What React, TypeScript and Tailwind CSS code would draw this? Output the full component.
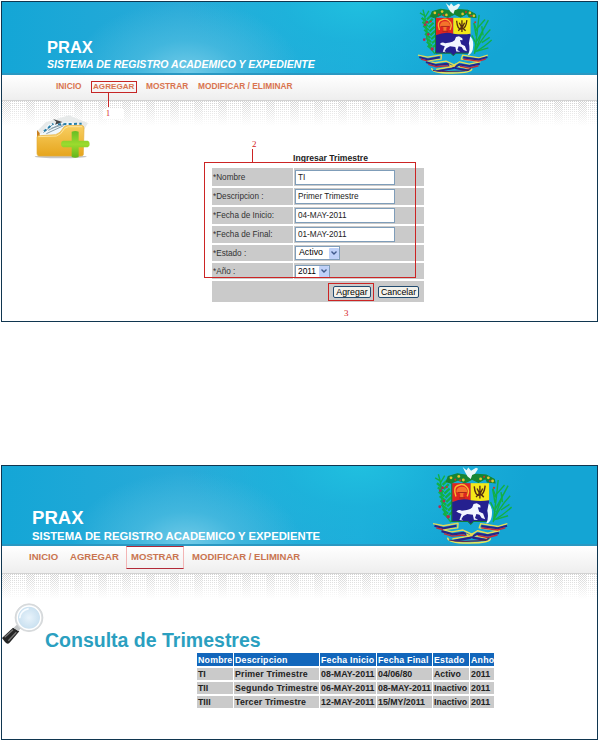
import React from "react";

function Crest({ className }: { className: string }) {
  const leaves = [64, 76, 88, 100, 112, 124, 136, 148];
  return (
    <svg className={className} viewBox="50 3 230 218" preserveAspectRatio="none">
      <g fill="none" stroke="#12b045" strokeWidth="4">
        <path d="M104 160 Q76 130 78 84 Q76 50 68 26 M72 44 l-13 -8 M74 50 l12 -20" />
        {leaves.map((y, i) => (
          <path key={y} d={`M${80 + i * 2.6} ${y} l-16 -13 M${80 + i * 2.6} ${y - 8} l15 -14`} strokeWidth="6.5" />
        ))}
        <path d="M224 160 Q232 100 238 42 M228 148 Q248 110 272 86 M226 130 Q244 100 266 58 M226 154 Q250 142 276 118 M229 106 L222 66 M226 90 l30 -34 M226 152 l26 -70" strokeWidth="4" />
        <path d="M230 132 l-14 -28 M233 92 l-10 -24 M246 126 l24 -16 M250 104 l-4 -28 M232 152 l34 -10" strokeWidth="4" />
      </g>
      <g fill="#b52a4e">
        <circle cx="80" cy="64" r="4" /><circle cx="74" cy="72" r="4" /><circle cx="84" cy="101" r="4" />
        <circle cx="72" cy="117" r="4" /><circle cx="96" cy="145" r="5" />
      </g>
      <path d="M91 47 L96 32 L122 25 L148 29 L177 26 L204 28 L227 40 L229 50 L207 48 L202 38 L182 49 L164 40 L143 50 L124 42 L104 51Z" fill="#158532" stroke="#158532" strokeWidth="3" />
      <g fill="#e3c62c">
        <circle cx="104" cy="36" r="4" /><circle cx="126" cy="32" r="4" /><circle cx="139" cy="42" r="4" />
        <circle cx="188" cy="39" r="4" /><circle cx="210" cy="36" r="4" /><circle cx="222" cy="45" r="4" />
      </g>
      <g fill="#cb3426">
        <circle cx="116" cy="41" r="3" /><circle cx="130" cy="43" r="3" /><circle cx="198" cy="33" r="3" /><circle cx="214" cy="45" r="3" />
        <circle cx="92" cy="62" r="3" /><circle cx="226" cy="64" r="3" />
      </g>
      <path d="M137 6 L148 15 L153 7 L161 16 L175 8 L181 11 L172 25 L164 28 L160 39 L151 32 L145 22Z" fill="#e8f6f7" />
      <path d="M107 51H160V103H107Z" fill="#df2520" />
      <path d="M160 51H212V103H160Z" fill="#f4e818" />
      <path d="M107 104 Q136 91 160 99 Q190 103 212 99 V158 H168 L160 166 L152 158 H107Z" fill="#25208f" />
      <path d="M106 51 V158 H152 L160 166 L168 158 H213" fill="none" stroke="#147a35" strokeWidth="3" />
      <path d="M118 88 Q108 61 126 57 Q138 51 148 61 Q158 70 150 88" fill="none" stroke="#f7bc30" strokeWidth="4" />
      <path d="M119 76 Q120 61 135 61 Q150 61 150 76 L139 80 V90 H130 V80Z" fill="#f4742b" />
      <path d="M123 77 H148 M127 92 H144" stroke="#a9281a" strokeWidth="3" />
      <path d="M170 60 Q172 87 185 85 Q198 85 201 58 M186 58 V94 M178 66 L186 82 L194 66 M175 90 L184 80 M197 90 L187 80" fill="none" stroke="#573012" strokeWidth="4" />
      <path d="M119 130 Q127 123 135 128 L149 126 Q158 125 164 119 L168 109 L177 107 L187 113 L188 119 L180 118 L184 131 L195 136 L201 152 L191 148 L185 139 L176 137 L172 148 L181 154 L169 153 L166 139 L150 137 L139 143 L133 152 L139 155 L128 154 L134 137 L125 134Z" fill="#f2f5ff" />
      <path d="M211 107 Q224 120 219 146 Q216 161 204 164 Q212 148 207 128" fill="#eefbff" />
      <g fill="none" strokeLinejoin="round">
        <path d="M53 164 L82 170 L124 163 L123 176 L80 181 L106 187 L138 182 L172 198 L207 205" stroke="#e3d858" strokeWidth="4" />
        <path d="M57 170 L83 177 L119 170 M77 185 L108 194 L140 190 L169 204 L209 211" stroke="#292486" strokeWidth="6" />
        <path d="M62 176 L81 181 M84 192 L107 199 L139 196 L152 202" stroke="#c22935" strokeWidth="4" />
        <path d="M264 164 L238 172 L188 164 L184 176 L241 184 L208 191 L179 184 L156 199 L108 207" stroke="#e8dc54" strokeWidth="4" />
        <path d="M263 170 L237 177 L190 171 M240 190 L209 197 L179 192 L158 204 L108 213" stroke="#25268c" strokeWidth="6" />
        <path d="M258 176 L236 182 L190 176 M236 196 L208 203 L180 197" stroke="#c92938" strokeWidth="4" />
        <path d="M94 203 Q96 219 158 218 Q217 218 216 205" stroke="#ece457" strokeWidth="4" />
        <path d="M98 210 Q120 215 159 213 Q205 213 213 204" stroke="#5e294e" strokeWidth="3" />
      </g>
      <path d="M146 191 L157 195 L168 188 L165 199 L150 201Z" fill="#e8d84b" />
    </svg>
  );
}

function Folder() {
  return (
    <svg className="block h-[44px] w-[57px]" viewBox="40 134 171 132" preserveAspectRatio="none">
      <defs>
        <linearGradient id="folder" x2="0" y2="1"><stop stopColor="#f8cf62" /><stop offset="1" stopColor="#e6a51d" /></linearGradient>
        <linearGradient id="plus" x2="0" y2="1"><stop stopColor="#68bd24" /><stop offset=".5" stopColor="#9bdb2e" /><stop offset="1" stopColor="#62b51c" /></linearGradient>
      </defs>
      <ellipse cx="120" cy="259" rx="78" ry="5" fill="#c5c5c5" />
      <path d="M48 184 L75 156 L145 135 L202 158 L190 178 L188 190 H50Z" fill="#e7eaea" />
      <path d="M49 179 L57 188 V205 H49Z" fill="#c98020" />
      <path d="M58 194 L84 161 L151 155 L176 164 L160 174 L75 203Z" fill="#eef7fc" />
      <path d="M68 187 L98 161 M83 180 L114 164 M77 190 L129 166 M92 174 L137 160" stroke="#8ba0aa" strokeWidth="3" />
      <path d="M70 183 L98 160 M112 162 L183 160" fill="none" stroke="#287da7" strokeWidth="6" strokeDasharray="9 7" />
      <path d="M97 146 L125 155 L103 163 L107 154Z" fill="#444" />
      <path d="M49 199 Q51 194 60 196 L105 193 Q119 190 129 171 Q133 165 142 166 L183 165 Q190 166 190 173 L188 253 Q187 257 181 257 H54 Q49 256 49 249Z" fill="url(#folder)" stroke="#e5ad36" strokeWidth="2" />
      <path d="M53 199 L107 197 Q121 194 132 174 L143 169 H184" fill="none" stroke="#ffe49a" strokeWidth="3" />
      <path d="M153 184 Q164 180 174 184 V211 H201 Q207 212 207 221 Q207 230 201 231 H174 V260 Q164 264 153 260 V231 H127 Q121 230 121 221 Q121 212 127 211 H153Z" fill="url(#plus)" />
    </svg>
  );
}

function Magnifier() {
  return (
    <svg className="block h-[42px] w-[43px] shrink-0" viewBox="6 40 129 126">
      <defs><radialGradient id="lens"><stop stopColor="#e8f3fb" /><stop offset=".8" stopColor="#cce2f1" /><stop offset="1" stopColor="#e2edf4" /></radialGradient></defs>
      <path d="M6 145 L39 114 L58 125 L28 160 Q22 165 15 157Z" fill="#252525" />
      <path d="M14 143 L39 120 M25 153 L49 128" stroke="#777" strokeWidth="4" />
      <path d="M41 114 L53 103 L65 113 L55 125Z" fill="#c3c6c8" />
      <circle cx="87" cy="84" r="39" fill="url(#lens)" stroke="#dadddf" strokeWidth="6" />
      <circle cx="87" cy="84" r="35" fill="none" stroke="white" strokeWidth="4" />
      <circle cx="87" cy="84" r="42" fill="none" stroke="#c8cccf" strokeWidth="1.5" />
      <path d="M59 86 Q60 63 86 57" fill="none" stroke="#f8fcff" strokeWidth="5" />
    </svg>
  );
}

function Dots({ id }: { id: string }) {
  return (
    <svg className="block h-[25px] w-full">
      <defs>
        <pattern id={id} width="24" height="2" patternUnits="userSpaceOnUse">
          <path d="M0 .5H24" stroke="#cccccc" strokeWidth="1" strokeDasharray="1 1" />
          <path d="M1 1.5H9" stroke="#d0d0d0" strokeWidth="1" strokeDasharray="1 1" />
        </pattern>
        <linearGradient id={id + "fade"} x2="0" y2="1"><stop stopColor="white" stopOpacity=".1" /><stop offset="1" stopColor="white" /></linearGradient>
      </defs>
      <rect width="100%" height="25" fill={`url(#${id})`} />
      <rect width="100%" height="25" fill={`url(#${id}fade)`} />
    </svg>
  );
}

const sky =
  "border-b-2 border-[#2a98c2] bg-[radial-gradient(ellipse_115px_72px_at_31%_100%,#72cbe8_0%,#4dbce0b0_45%,transparent_100%),radial-gradient(ellipse_170px_90px_at_60%_0%,#20bfdf_0%,#1cb4dbb0_45%,transparent_100%),linear-gradient(90deg,#14a6d6_0%,#29aad8_30%,#1daedb_60%,#14a5d4_75%,#14a5d4_100%)]";

const cell = "bg-[#cacaca] flex items-center";
const input = "h-[15px] w-[100px] border border-[#7f9db9] bg-white pl-[2px] leading-[14px] text-[#222]";

function Arrow() {
  return (
    <span className="flex h-[11px] w-[10px] items-center justify-center rounded-[1px] bg-[#bfd1f8]">
      <svg className="h-[4px] w-[6px]" viewBox="0 0 6 4"><path d="M.5 .5L3 3L5.5 .5" fill="none" stroke="#405a8c" strokeWidth="1.4" /></svg>
    </span>
  );
}

function Field({ label, children }: { label: string; children: React.ReactNode }) {
  return (
    <>
      <div className={cell + " pl-px pt-[2px] text-[#333]"}>{label}</div>
      <div className={cell + " pl-px"}>{children}</div>
    </>
  );
}

const rows = [
  ["TI", "Primer Trimestre", "08-MAY-2011", "04/06/80", "Activo", "2011"],
  ["TII", "Segundo Trimestre", "06-MAY-2011", "08-MAY-2011", "Inactivo", "2011"],
  ["TIII", "Tercer Trimestre", "12-MAY-2011", "15/MY/2011", "Inactivo", "2011"],
];
const spacing = ["", "tracking-[0.18px]", "tracking-[0.05px]", "", "", ""];
const button = "h-[12px] rounded-[2px] border border-[#234c70] bg-[#f3f2ec] text-center text-[8.8px] leading-[11px] text-black";

export default function App() {
  return (
    <main className="h-[740px] w-[598px] overflow-hidden whitespace-nowrap bg-white pl-px pt-px font-['Liberation_Sans',Arial,sans-serif]">
      <section className="relative h-[321px] w-[597px] border border-[#103650]">
        <header className={"flex h-[73px] justify-between " + sky}>
          <div className="pl-[45px] pt-[36px] font-bold text-white">
            <h1 className="text-[16.5px] leading-[19px]">PRAX</h1>
            <p className="text-[10.5px] italic leading-[15px]">SISTEMA DE REGISTRO ACADEMICO Y EXPEDIENTE</p>
          </div>
          <Crest className="mr-[104px] h-[72px] w-[76px] shrink-0" />
        </header>
        <nav className="flex h-[26px] border-b border-[#d2d2d2] bg-gradient-to-b from-white to-[#eeeeee] pl-[54px] pt-[5px] text-[8.35px] font-bold leading-[13px] text-[#d9744f]">
          <span className="w-[37px]">INICIO</span><span className="w-[53px] text-[8.1px]">AGREGAR</span><span className="w-[52px]">MOSTRAR</span><span>MODIFICAR / ELIMINAR</span>
        </nav>
        <Dots id="dotsA" />
        <div className="-mt-[11px] pl-[32px]"><Folder /></div>
        <div className="-mt-[7px] ml-[210px] w-[212px] text-[8.2px]">
          <h2 className="h-[16px] pl-[81px] text-[8.6px] font-bold leading-[12px] text-[#222]">Ingresar Trimestre</h2>
          <div className="grid grid-cols-[81px_130px] grid-rows-[18px_17px_17px_17px_16px_16px_21px] gap-x-px gap-y-[2px]">
            <Field label="*Nombre"><span className={input}>TI</span></Field>
            <Field label="*Descripcion :"><span className={input}>Primer Trimestre</span></Field>
            <Field label="*Fecha de Inicio:"><span className={input}>04-MAY-2011</span></Field>
            <Field label="*Fecha de Final:"><span className={input}>01-MAY-2011</span></Field>
            <Field label="*Estado :"><span className="flex h-[14px] w-[45px] items-center justify-between border border-[#7f9db9] bg-white pl-[3px] text-[8.8px]">Activo<Arrow /></span></Field>
            <Field label="*Año :"><span className="flex h-[13px] w-[35px] items-center justify-between border border-[#7f9db9] bg-white pl-[2px] text-[8.4px]">2011<Arrow /></span></Field>
            <div className="col-span-2 flex justify-end gap-[7px] bg-[#cacaca] pr-[5px] pt-[5px]">
              <span className={button + " w-[38px]"}>Agregar</span><span className={button + " w-[41px]"}>Cancelar</span>
            </div>
          </div>
        </div>
        <div className="absolute left-[89px] top-[79px] h-[12px] w-[46px] border border-[#c52626]" />
        <div className="absolute left-[106px] top-[91px] h-[14px] w-px bg-[#c52626]" />
        <span className="absolute left-[101px] top-[107px] w-[21px] bg-white pl-[3px] font-['Liberation_Serif',serif] text-[8px] leading-[10px] text-[#d52222]">1</span>
        <div className="absolute left-[202px] top-[160px] h-[116px] w-[212px] border border-[#cc2424]" />
        <div className="absolute left-[250px] top-[147px] h-[13px] w-px bg-[#cc2424]" />
        <span className="absolute left-[250px] top-[137px] font-['Liberation_Serif',serif] text-[9px] leading-[10px] text-[#d52222]">2</span>
        <div className="absolute left-[326px] top-[281px] h-[18px] w-[46px] border border-[#cc2424]" />
        <span className="absolute left-[342px] top-[306px] font-['Liberation_Serif',serif] text-[9px] leading-[10px] text-[#d52222]">3</span>
      </section>

      <section className="relative mt-[143px] h-[275px] w-[597px] border border-[#103650]">
        <header className={"flex h-[80px] justify-between " + sky}>
          <div className="pl-[30px] pt-[41px] font-bold text-white">
            <h1 className="text-[18.6px] leading-[21px]">PRAX</h1>
            <p className="text-[11.3px] leading-[16px]">SISTEMA DE REGISTRO ACADEMICO Y EXPEDIENTE</p>
          </div>
          <Crest className="mr-[84px] h-[78px] w-[81px] shrink-0" />
        </header>
        <nav className="flex h-[28px] border-b border-[#d2d2d2] bg-gradient-to-b from-white to-[#eeeeee] pl-[27px] pt-[4px] text-[9.55px] font-bold leading-[14px] text-[#c97550]">
          <span className="w-[41px]">INICIO</span><span className="w-[61px]">AGREGAR</span><span className="w-[61px]">MOSTRAR</span><span>MODIFICAR / ELIMINAR</span>
        </nav>
        <Dots id="dotsB" />
        <div className="mt-[4px] flex h-[50px]">
          <Magnifier />
          <h2 className="pt-[25px] text-[19.5px] font-bold leading-[24px] text-[#2b9fc0]">Consulta de Trimestres</h2>
        </div>
        <div className="ml-[195px] grid w-[297px] grid-cols-[36px_85px_56px_55px_36px_24px] grid-rows-[13px_12px_12px_12px] gap-x-px gap-y-[2px] text-[8.8px] font-bold leading-[13px]">
          {["Nombre", "Descripcion", "Fecha Inicio", "Fecha Final", "Estado", "Anho"].map((h) => (
            <div key={h} className="bg-[#1266bb] pl-px leading-[14px] tracking-[0.2px] text-white">{h}</div>
          ))}
          {rows.flat().map((v, i) => (
            <div key={i} className={"bg-[#cacaca] pl-px text-[#222] " + spacing[i % 6]}>{v}</div>
          ))}
        </div>
        <div className="absolute left-[124px] top-[80px] h-[23px] w-[58px] border border-x-[#f3b5b5] border-y-[#b22a38]" />
      </section>
    </main>
  );
}
